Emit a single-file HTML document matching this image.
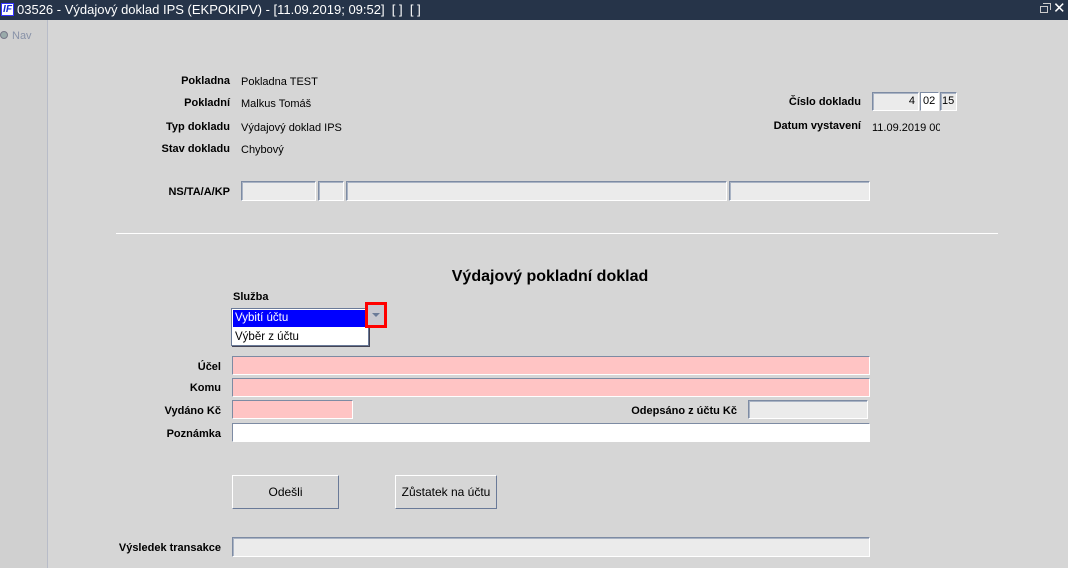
<!DOCTYPE html>
<html><head><meta charset="utf-8"><style>
*{margin:0;padding:0;box-sizing:border-box}
body{width:1068px;height:568px;overflow:hidden;background:#d6d6d6;font-family:"Liberation Sans",Arial,sans-serif;font-size:11px;color:#000;position:relative}
.a{position:absolute}
.lb{position:absolute;font-weight:bold;font-size:11px;text-align:right;white-space:nowrap}
.tx{position:absolute;font-size:11px;white-space:nowrap}
.f{position:absolute;background:#ebebeb;border:1px solid #7d8ba3;border-right-color:#fff;border-bottom-color:#fff;box-shadow:inset 1px 1px 0 #a9b3c4}
.p{position:absolute;background:#ffc4c4;border:1px solid #7d8ba3;border-right-color:#fff;border-bottom-color:#fff}
.w{position:absolute;background:#fff;border:1px solid #7d8ba3;border-right-color:#fff;border-bottom-color:#fff}
.btn{position:absolute;background:#d6d6d6;border:1px solid #fff;border-right-color:#6a7a98;border-bottom-color:#6a7a98;font-size:12px;text-align:center}
</style></head><body>
<div class="a" style="left:0;top:0;width:1068px;height:20px;background:#263449;color:#fff;font-size:13px;line-height:20px">
 <div class="a" style="left:1px;top:3px;width:13px;height:13px;background:#fff;border:1px solid #33f;color:#1428d0;font-size:10px;font-weight:bold;font-style:italic;line-height:11px;text-align:center">IF</div>
 <span class="a" style="left:17px;top:0">03526 - Výdajový doklad IPS (EKPOKIPV) - [11.09.2019; 09:52]&nbsp; [ ]&nbsp; [ ]</span>
 <div class="a" style="left:1040px;top:6px;width:8px;height:7px;border:1px solid #ccc"></div>
 <div class="a" style="left:1043px;top:3px;width:8px;height:7px;border:1px solid #ccc;border-left:none;border-bottom:none"></div>
 <span class="a" style="left:1053px;top:-1px;font-size:15px">✕</span>
</div>
<div class="a" style="left:0;top:20px;width:48px;height:548px;background:#d0d0d0;border-right:1px solid #b8bcc8"></div>
<div class="a" style="left:0;top:31px;width:8px;height:8px;border-radius:50%;background:#9aa;border:1px solid #778"></div>
<span class="tx" style="left:12px;top:30px;color:#8892a8;font-size:11px">Nav</span>

<div class="lb" style="right:838px;top:75px">Pokladna</div><div class="tx" style="left:241px;top:76px">Pokladna TEST</div>
<div class="lb" style="right:838px;top:97px">Pokladní</div><div class="tx" style="left:241px;top:98px">Malkus Tomáš</div>
<div class="lb" style="right:838px;top:121px">Typ dokladu</div><div class="tx" style="left:241px;top:122px">Výdajový doklad IPS</div>
<div class="lb" style="right:838px;top:143px">Stav dokladu</div><div class="tx" style="left:241px;top:144px">Chybový</div>

<div class="lb" style="right:207px;top:96px">Číslo dokladu</div>
<div class="f" style="left:872px;top:92px;width:47px;height:19px;text-align:right;padding:2px 3px 0 0">4</div>
<div class="w" style="left:920px;top:92px;width:19px;height:19px;padding:2px 0 0 2px">02</div>
<div class="f" style="left:940px;top:92px;width:17px;height:19px;padding:2px 0 0 1px">15</div>
<div class="lb" style="right:207px;top:120px">Datum vystavení</div>
<div class="tx" style="left:872px;top:122px;width:68px;overflow:hidden">11.09.2019 00</div>

<div class="lb" style="right:838px;top:186px">NS/TA/A/KP</div>
<div class="f" style="left:241px;top:181px;width:75px;height:20px"></div>
<div class="f" style="left:318px;top:181px;width:26px;height:20px"></div>
<div class="f" style="left:346px;top:181px;width:381px;height:20px"></div>
<div class="f" style="left:729px;top:181px;width:141px;height:20px"></div>

<div class="a" style="left:116px;top:233px;width:882px;height:1px;background:#888;border-bottom:1px solid #fff"></div>

<div class="a" style="left:0;top:268px;width:1100px;text-align:center;font-weight:bold;font-size:16px">Výdajový pokladní doklad</div>
<div class="lb" style="left:233px;top:291px;text-align:left">Služba</div>
<div class="a" style="left:231px;top:308px;width:138px;height:38px;background:#fff;border:1px solid #6a7a98;box-shadow:1px 1px 0 #445"></div>
<div class="a" style="left:233px;top:310px;width:133px;height:17px;background:#0000ff;color:#fff;font-size:11.5px;padding:2px 0 0 2px">Vybití účtu</div>
<div class="tx" style="left:235px;top:331px;font-size:11.5px">Výběr z účtu</div>
<div class="a" style="left:365px;top:302px;width:22px;height:26px;border:3px solid #f00;background:#c8c8d0"></div>
<div class="a" style="left:372px;top:313px;width:0;height:0;border-left:4px solid transparent;border-right:4px solid transparent;border-top:4px solid #6a7a98"></div>

<div class="lb" style="right:847px;top:361px">Účel</div><div class="p" style="left:232px;top:356px;width:638px;height:19px"></div>
<div class="lb" style="right:847px;top:382px">Komu</div><div class="p" style="left:232px;top:378px;width:638px;height:19px"></div>
<div class="lb" style="right:847px;top:405px">Vydáno Kč</div><div class="p" style="left:232px;top:400px;width:121px;height:19px"></div>
<div class="lb" style="right:331px;top:405px">Odepsáno z účtu Kč</div><div class="f" style="left:748px;top:400px;width:120px;height:19px"></div>
<div class="lb" style="right:847px;top:428px">Poznámka</div><div class="w" style="left:232px;top:423px;width:638px;height:19px"></div>

<div class="btn" style="left:232px;top:475px;width:107px;height:34px;line-height:32px">Odešli</div>
<div class="btn" style="left:395px;top:475px;width:102px;height:34px;line-height:32px">Zůstatek na účtu</div>

<div class="lb" style="right:847px;top:542px">Výsledek transakce</div>
<div class="f" style="left:232px;top:537px;width:638px;height:20px"></div>
</body></html>
